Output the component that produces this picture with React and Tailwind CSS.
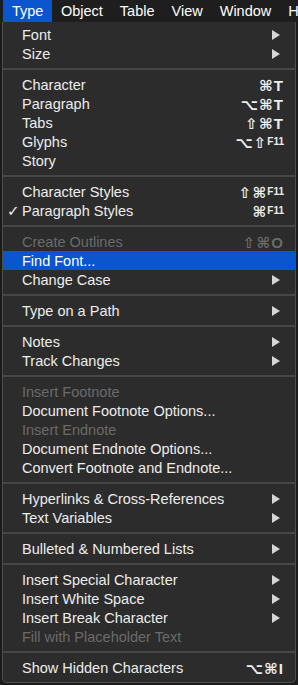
import React from "react";

const menus = ["Type", "Object", "Table", "View", "Window", "Help"];

const items = [
	{ label: "Font", sub: true },
	{ label: "Size", sub: true },
	{ sep: true },
	{ label: "Character", keys: "⌘T" },
	{ label: "Paragraph", keys: "⌥⌘T" },
	{ label: "Tabs", keys: "⇧⌘T" },
	{ label: "Glyphs", keys: "⌥⇧", fkey: "F11" },
	{ label: "Story" },
	{ sep: true },
	{ label: "Character Styles", keys: "⇧⌘", fkey: "F11" },
	{ label: "Paragraph Styles", keys: "⌘", fkey: "F11", checked: true },
	{ sep: true },
	{ label: "Create Outlines", keys: "⇧⌘O", disabled: true },
	{ label: "Find Font...", active: true },
	{ label: "Change Case", sub: true },
	{ sep: true },
	{ label: "Type on a Path", sub: true },
	{ sep: true },
	{ label: "Notes", sub: true },
	{ label: "Track Changes", sub: true },
	{ sep: true },
	{ label: "Insert Footnote", disabled: true },
	{ label: "Document Footnote Options..." },
	{ label: "Insert Endnote", disabled: true },
	{ label: "Document Endnote Options..." },
	{ label: "Convert Footnote and Endnote..." },
	{ sep: true },
	{ label: "Hyperlinks & Cross-References", sub: true },
	{ label: "Text Variables", sub: true },
	{ sep: true },
	{ label: "Bulleted & Numbered Lists", sub: true },
	{ sep: true },
	{ label: "Insert Special Character", sub: true },
	{ label: "Insert White Space", sub: true },
	{ label: "Insert Break Character", sub: true },
	{ label: "Fill with Placeholder Text", disabled: true },
	{ sep: true },
	{ label: "Show Hidden Characters", keys: "⌥⌘I" },
];

function Arrow() {
	return (
		<svg width="8" height="10" viewBox="0 0 8 10" className="mr-[15px]">
			<path d="M0 0 L8 5 L0 10 Z" fill="#d6d6d6" />
		</svg>
	);
}

function Row({ item }) {
	const color = item.disabled ? "text-[#6a6a6a]" : "text-[#ececec]";
	return (
		<div
			className={
				"relative flex h-[19px] items-center justify-between pt-[1px] pl-[19px] " +
				(item.active ? "bg-[#0b55cf] text-white" : color)
			}
		>
			{item.checked && (
				<span className="absolute left-[4px] top-[2px] text-[15px]">✓</span>
			)}
			<span className="whitespace-nowrap">{item.label}</span>
			{item.sub && <Arrow />}
			{item.keys && (
				<span className="mr-[11px] flex items-center text-[15px] font-bold tracking-[1px]">
					{item.keys}
					{item.fkey && <span className="text-[10px] tracking-normal">{item.fkey}</span>}
				</span>
			)}
		</div>
	);
}

export default function App() {
	return (
		<div
			className="h-[685px] w-[298px] overflow-hidden bg-[#1c1c1c] text-[14.5px] leading-none"
			style={{ fontFamily: '"Liberation Sans", "DejaVu Sans", sans-serif' }}
		>
			<div className="flex h-[22px] items-center bg-[#1e1e1e] pl-[3px] text-white">
				{menus.map((m, i) => (
					<div
						key={m}
						className={
							"flex h-full items-center whitespace-nowrap px-[8.5px] pt-[1px] " +
							(i === 0 ? "bg-[#0b55cf] px-[9px]" : "")
						}
					>
						{m}
					</div>
				))}
			</div>
			<div className="ml-[2px] w-[294px] rounded-b-[5px] border-x border-b border-[#4e4e4e] bg-[#2c2c2c] pt-[3px] pb-[5px]">
				{items.map((item, i) =>
					item.sep ? (
						<div key={i} className="flex h-[12px] items-center">
							<div className="h-[2px] w-full bg-[#464646]" />
						</div>
					) : (
						<Row key={i} item={item} />
					)
				)}
			</div>
		</div>
	);
}
